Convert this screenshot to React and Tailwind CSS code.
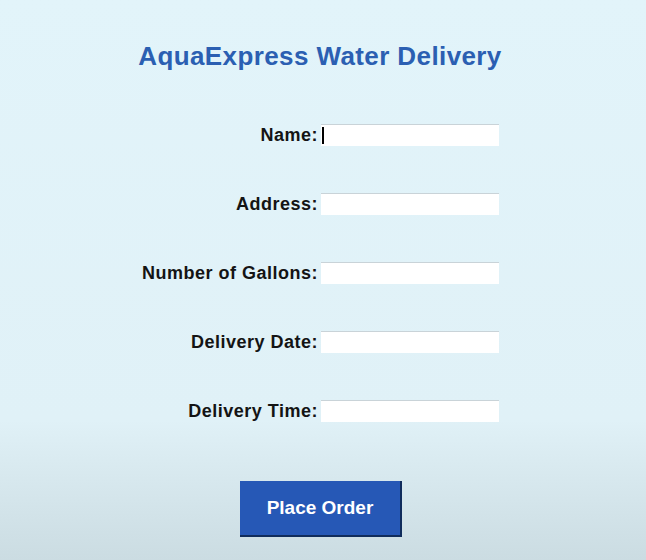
const fields = ['Name', 'Address', 'Number of Gallons', 'Delivery Date', 'Delivery Time']

export default function App() {
  return (
    <div
      className="w-[646px] h-[560px] bg-gradient-to-b from-[#e2f4fa] via-[#e0f1f7] via-75% to-[#cbdce2] flex flex-col"
      style={{ fontFamily: '"Liberation Sans", Arial, sans-serif' }}
    >
      <h1 className="mt-[40px] pr-[6px] text-center text-[26px] leading-[32px] font-bold tracking-[0.4px] text-[#2b5fb2]">
        AquaExpress Water Delivery
      </h1>

      <div className="mt-[52px] pl-[120px] flex flex-col gap-[47px]">
        {fields.map((f, i) => (
          <div key={f} className="flex items-center h-[22px]">
            <label className="w-[198px] text-right text-[18px] font-bold tracking-[0.5px] text-[#141414]">{f}:</label>
            <div className="ml-[3px] relative w-[178px] h-[22px] bg-white border-t border-[#c9d3d8]">
              {i === 0 && <div className="absolute left-[1px] top-[2px] w-[2px] h-[17px] bg-black" />}
            </div>
          </div>
        ))}
      </div>

      <div className="mt-[59px] flex justify-center">
        <button className="ml-[-4px] w-[162px] h-[56px] bg-[#2658b6] text-white text-[19px] font-bold border-r-2 border-b-2 border-[#102c5c]">
          Place Order
        </button>
      </div>
    </div>
  )
}
